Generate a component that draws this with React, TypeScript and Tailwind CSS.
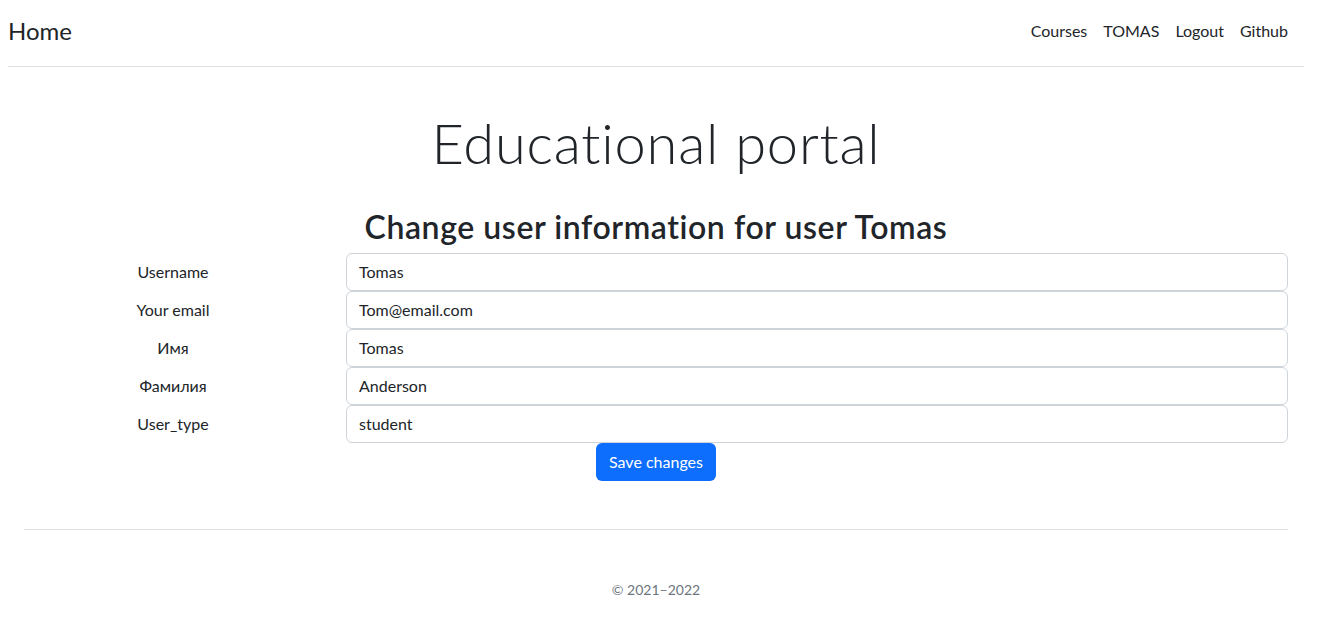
import React from 'react';

const fields = [
  { label: 'Username', value: 'Tomas' },
  { label: 'Your email', value: 'Tom@email.com' },
  { label: 'Имя', value: 'Tomas' },
  { label: 'Фамилия', value: 'Anderson' },
  { label: 'User_type', value: 'student' },
];

const links = ['Courses', 'TOMAS', 'Logout', 'Github'];

export default function App() {
  return (
    <div className="w-[1312px] min-h-[642px] bg-white text-[#212529] font-['Segoe_UI','Lato',sans-serif]">
      {/* Header */}
      <header className="mx-2 h-[67px] flex items-center justify-between border-b border-[#dee2e6]">
        <a className="text-[24px] leading-[36px] text-[#212529] -mt-[4px]">Home</a>
        <nav className="flex items-center pr-2 -mt-[5px]">
          {links.map((l) => (
            <a key={l} className="px-2 py-2 text-[16px] leading-6 text-[#212529]">
              {l}
            </a>
          ))}
        </nav>
      </header>

      <main className="px-6">
        <h1 className="mt-[42px] text-center text-[56px] leading-[1.2] font-light tracking-[0.014em]">
          Educational portal
        </h1>
        <h2 className="mt-[32px] text-center text-[32px] leading-[1.2] font-semibold tracking-[0.018em]">
          Change user information for user Tomas
        </h2>

        <form className="mt-[6px]">
          {fields.map((f) => (
            <div key={f.label} className="flex items-center">
              <label className="w-[298px] text-center text-[16px]">{f.label}</label>
              <input
                readOnly
                value={f.value}
                className="ml-6 flex-1 h-[38px] px-3 border border-[#ced4da] rounded-[6px] text-[16px] text-[#212529] outline-none"
              />
            </div>
          ))}
          <div className="flex justify-center">
            <button
              type="button"
              className="h-[38px] px-[13px] bg-[#0d6efd] text-white text-[16px] rounded-[6px]"
            >
              Save changes
            </button>
          </div>
        </form>

        <hr className="mt-[48px] border-t border-[#dee2e6]" />
        <p className="mt-[49px] text-center text-[14px] text-[#6c757d]">© 2021–2022</p>
      </main>
    </div>
  );
}
